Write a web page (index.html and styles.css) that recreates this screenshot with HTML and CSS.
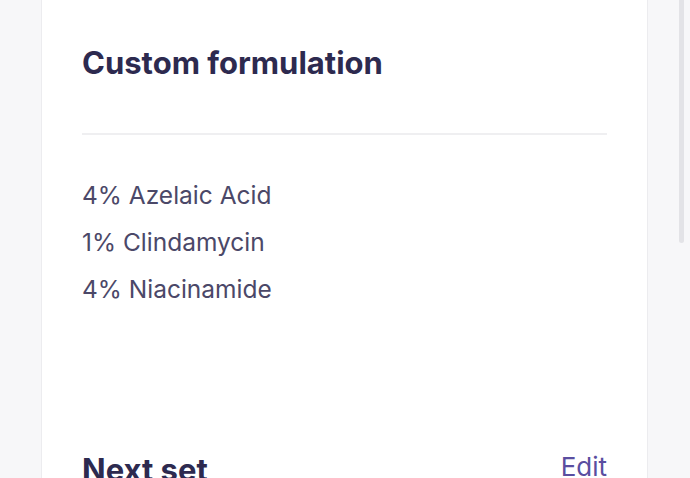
FILE: index.html
```html
<!DOCTYPE html>
<html>
<head>
<meta charset="utf-8">
<link rel="stylesheet" href="styles.css">
</head>
<body>
<div class="page">
  <section class="card">
    <h2 class="title">Custom formulation</h2>
    <hr class="divider">
    <ul class="ingredients">
      <li>4% Azelaic Acid</li>
      <li>1% Clindamycin</li>
      <li>4% Niacinamide</li>
    </ul>
    <div class="section-head">
      <h2 class="title">Next set</h2>
      <a class="edit" href="#">Edit</a>
    </div>
  </section>
</div>
<div class="scroll-thumb"></div>
</body>
</html>
```
FILE: styles.css
```css
html, body {
  margin: 0;
  padding: 0;
  height: 100%;
  overflow: hidden;
}
body {
  background: #f7f7f9;
  font-family: "Inter", "Lato", sans-serif;
}
.page {
  padding-left: 41px;
}
.card {
  width: 525px;
  min-height: 600px;
  background: #ffffff;
  border-left: 1px solid #ececef;
  border-right: 1px solid #ececef;
  padding: 44px 40px 0 40px;
}
.title {
  margin: 0;
  font-size: 31px;
  line-height: 38px;
  font-weight: 700;
  color: #2d2a4f;
}
.divider {
  margin: 51px 0 0 0;
  border: 0;
  border-top: 2px solid #efeff1;
  height: 0;
}
.ingredients {
  list-style: none;
  margin: 37px 0 0 0;
  padding: 0;
}
.ingredients li {
  font-size: 24.5px;
  line-height: 47px;
  color: #4b4868;
}
.section-head {
  margin-top: 138px;
  display: flex;
  justify-content: space-between;
  align-items: center;
}
.edit {
  font-size: 26px;
  line-height: 32px;
  margin-top: -6px;
  color: #5a4ea0;
  text-decoration: none;
}
.scroll-thumb {
  position: fixed;
  top: 0;
  right: 6px;
  width: 5px;
  height: 243px;
  border-radius: 0 0 3px 3px;
  background: #e3e3e7;
}
```
